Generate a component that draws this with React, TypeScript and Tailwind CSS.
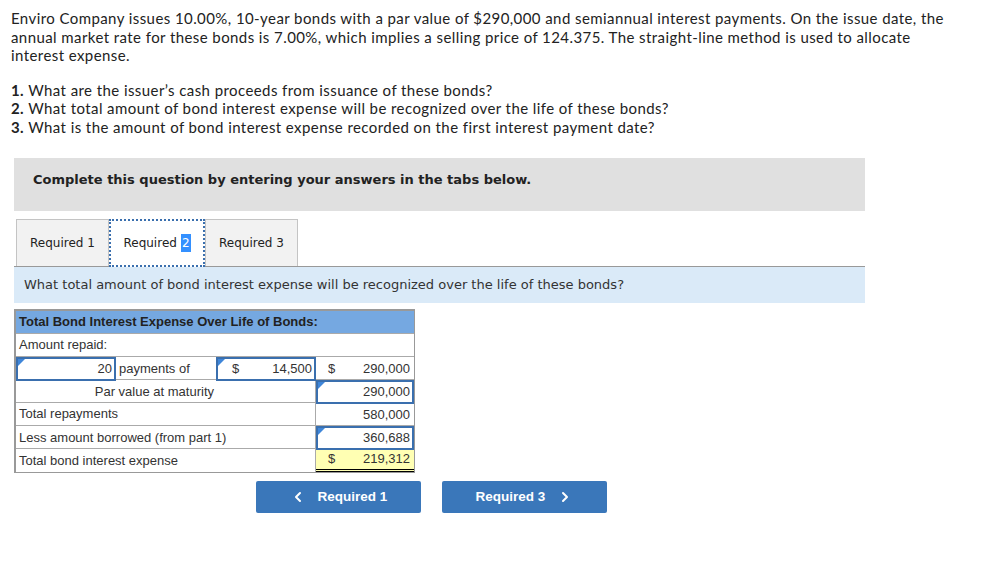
import { ChevronLeft, ChevronRight } from "lucide-react";

const Flag = () => (
    <span className="absolute left-0 top-0 w-0 h-0 border-t-[7px] border-t-[#3f86d9] border-r-[7px] border-r-transparent" />
);

const AnswerCell = ({
    children,
    flag = true,
    className = "",
}: {
    children: React.ReactNode;
    flag?: boolean;
    className?: string;
}) => (
    <div
        className={`relative h-full flex items-center border-2 border-[#3a6fae] px-[2px] ${className}`}
    >
        {flag && <Flag />}
        {children}
    </div>
);

const App = () => {
    return (
        <div className="w-[985px] h-[569px] bg-white text-[#333] overflow-hidden">
            <div className="pl-[11px] pt-[9px] font-['Lato',sans-serif] text-[15px] leading-[18.5px] tracking-[0.42px] text-[#222]">
                <p>
                    Enviro Company issues 10.00%, 10-year bonds with a par value of $290,000 and
                    semiannual interest payments. On the issue date, the
                    <br />
                    annual market rate for these bonds is 7.00%, which implies a selling price of
                    124.375. The straight-line method is used to allocate
                    <br />
                    interest expense.
                </p>
                <ol className="mt-[16px]">
                    <li>
                        <b>1.</b> What are the issuer’s cash proceeds from issuance of these bonds?
                    </li>
                    <li>
                        <b>2.</b> What total amount of bond interest expense will be recognized over
                        the life of these bonds?
                    </li>
                    <li>
                        <b>3.</b> What is the amount of bond interest expense recorded on the first
                        interest payment date?
                    </li>
                </ol>
            </div>

            <div className="ml-[14px] w-[851px]">
                <div className="mt-[22px] h-[53px] bg-[#e0e0e0] pt-[12px] pl-[19px] leading-[20px] font-['DejaVu_Sans',sans-serif] text-[13px] font-bold text-[#222]">
                    Complete this question by entering your answers in the tabs below.
                </div>

                {/* tabs */}
                <div className="mt-[8px] flex pl-[2px] font-['DejaVu_Sans',sans-serif] text-[12px] text-[#222]">
                    <div className="w-[93px] h-[47px] flex items-center justify-center bg-[#f2f2f2] border border-[#c4c4c4] border-b-0">
                        Required 1
                    </div>
                    <div className="w-[96px] h-[48px] flex items-center justify-center bg-white border-2 border-dotted border-[#3a6fae] -mb-[1px] relative z-10">
                        Required <span className="ml-[4px] bg-[#3390ff] text-white px-[1px]">2</span>
                    </div>
                    <div className="w-[93px] h-[47px] flex items-center justify-center bg-[#f2f2f2] border border-[#c4c4c4] border-b-0">
                        Required 3
                    </div>
                </div>
                <div className="h-[37px] bg-[#daeaf8] border-t border-[#999] flex items-center pl-[10px] font-['DejaVu_Sans',sans-serif] text-[13px] text-[#333]">
                    What total amount of bond interest expense will be recognized over the life of
                    these bonds?
                </div>

                {/* table */}
                <div className="mt-[6px] w-[401px] border-t-2 border-[#999] font-['Liberation_Sans',Arial,sans-serif] text-[13px] text-[#333]">
                    <div className="border-l-2 border-r border-b border-[#999]">
                        <div className="h-[23px] bg-[#75a8e1] flex items-center pl-[3px] font-bold text-[#222] border-b border-[#aaa]">
                            Total Bond Interest Expense Over Life of Bonds:
                        </div>
                        <div className="h-[23px] flex items-center pl-[3px] border-b border-[#aaa]">
                            Amount repaid:
                        </div>
                        <div className="h-[23px] grid grid-cols-[100px_100px_100px_1fr] border-b border-[#aaa]">
                            <AnswerCell className="justify-end">20</AnswerCell>
                            <div className="flex items-center pl-[3px]">payments of</div>
                            <AnswerCell className="justify-between pl-[14px]">
                                <span>$</span>
                                <span>14,500</span>
                            </AnswerCell>
                            <div className="flex items-center justify-between pl-[12px] pr-[4px]">
                                <span>$</span>
                                <span>290,000</span>
                            </div>
                        </div>
                        <div className="h-[23px] grid grid-cols-[200px_100px_1fr] border-b border-[#aaa]">
                            <div className="flex items-center justify-end pr-[2px]">
                                Par value at maturity
                            </div>
                            <div className="border-r border-[#aaa]" />
                            <AnswerCell className="justify-end">290,000</AnswerCell>
                        </div>
                        <div className="h-[23px] grid grid-cols-[300px_1fr] border-b border-[#aaa]">
                            <div className="flex items-center pl-[3px] border-r border-[#aaa]">
                                Total repayments
                            </div>
                            <div className="flex items-center justify-end pr-[4px] border-t-2 border-black -mt-[1px]">
                                580,000
                            </div>
                        </div>
                        <div className="h-[23px] grid grid-cols-[300px_1fr] border-b border-[#aaa]">
                            <div className="flex items-center pl-[3px] border-r border-[#aaa]">
                                Less amount borrowed (from part 1)
                            </div>
                            <AnswerCell className="justify-end">360,688</AnswerCell>
                        </div>
                        <div className="h-[23px] grid grid-cols-[300px_1fr]">
                            <div className="flex items-center pl-[3px] border-r border-[#aaa]">
                                Total bond interest expense
                            </div>
                            <div className="flex items-center justify-between pl-[12px] pr-[4px] bg-[#ffffb3] border-b-[3px] border-double border-black">
                                <span>$</span>
                                <span>219,312</span>
                            </div>
                        </div>
                    </div>
                </div>

                {/* nav buttons */}
                <div className="mt-[8px] ml-[242px] flex gap-[21px] font-['Liberation_Sans',Arial,sans-serif] text-[13.5px] font-bold text-white">
                    <button className="w-[165px] h-[32px] bg-[#3a77ba] rounded-[2px] flex items-center justify-center gap-[12px]">
                        <ChevronLeft size={16} strokeWidth={3} />
                        Required 1
                    </button>
                    <button className="w-[165px] h-[32px] bg-[#3a77ba] rounded-[2px] flex items-center justify-center gap-[12px]">
                        Required 3
                        <ChevronRight size={16} strokeWidth={3} />
                    </button>
                </div>
            </div>
        </div>
    );
};

export default App;
